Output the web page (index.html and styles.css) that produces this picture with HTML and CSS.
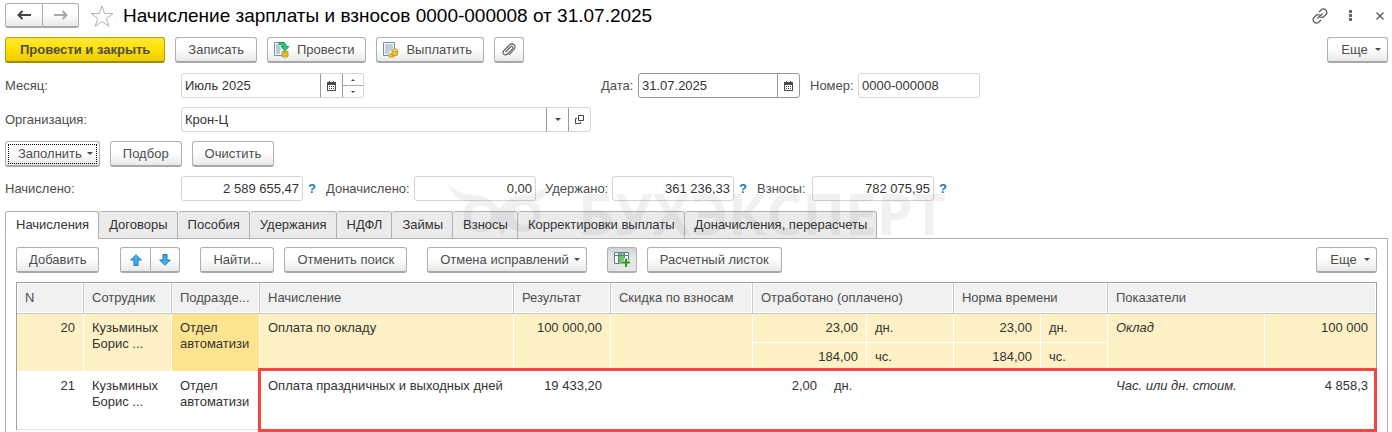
FILE: index.html
```html
<!DOCTYPE html>
<html lang="ru">
<head>
<meta charset="utf-8">
<title>Начисление зарплаты и взносов</title>
<link rel="stylesheet" href="styles.css">
</head>
<body>
<svg class="sprite" aria-hidden="true">
  <symbol id="calendar" viewBox="0 0 9 10"><path d="M0 1h2V0h1v1h3V0h1v1h2v9H0zM1 4v5h7V4z" fill="#4a4a4a" fill-rule="evenodd"/><path d="M2 5h1v1H2zM4 5h1v1H4zM6 5h1v1H6zM2 7h1v1H2zM4 7h1v1H4zM6 7h1v1H6z" fill="#4a4a4a"/></symbol>
  <symbol id="caret" viewBox="0 0 6 3"><path d="M0 0h6L3 3z" fill="#4a4a4a"/></symbol>
</svg>

<header class="titlebar">
  <div class="pair nav">
    <button class="btn" type="button" aria-label="Назад"><svg width="14" height="10" viewBox="0 0 14 10"><path d="M14 5H2M5.500 1L1.500 5l4 4" fill="none" stroke="#444" stroke-width="2"/></svg></button>
    <button class="btn" type="button" aria-label="Вперед"><svg width="14" height="10" viewBox="0 0 14 10"><path d="M0 5h12M8.500 1l4 4-4 4" fill="none" stroke="#aaa" stroke-width="2"/></svg></button>
  </div>
  <button class="plain star" type="button" aria-label="В избранное"><svg width="24" height="22" viewBox="0 0 24 22"><path d="M12 1l2.600 7.500H23l-6.700 5 2.500 7.800L12 16.500l-6.800 4.800 2.500-7.800L1 8.500h8.400z" fill="#fff" stroke="#aeb4bd"/></svg></button>
  <h1>Начисление зарплаты и взносов 0000-000008 от 31.07.2025</h1>
  <div class="window-tools">
    <button class="plain" type="button" aria-label="Ссылка"><svg width="16" height="16" viewBox="0 0 16 16"><g fill="none" stroke="#555" stroke-width="1.200"><path d="M7 4l2.500-2.500q2-1.300 4 .2t1.200 4L12 8.500q-1.500 1.300-3.500.6"/><path d="M9 12l-2.500 2.500q-2 1.300-4-.2t-1.200-4L4 7.500q1.500-1.300 3.500-.6M5.500 10.500l5-5"/></g></svg></button>
    <button class="plain" type="button" aria-label="Меню"><svg width="3" height="11" viewBox="0 0 3 11"><path d="M0 0h3v3H0zM0 4h3v3H0zM0 8h3v3H0z" fill="#666"/></svg></button>
    <button class="plain" type="button" aria-label="Закрыть"><svg width="8" height="8" viewBox="0 0 8 8"><path d="M.5.500l7 7M7.500.500l-7 7" stroke="#555" stroke-width="1.200"/></svg></button>
  </div>
</header>

<div class="toolbar commands">
  <button class="btn primary" type="button">Провести и закрыть</button>
  <button class="btn" type="button">Записать</button>
  <button class="btn with-icon" type="button"><svg width="16" height="17" viewBox="0 0 16 17"><path d="M.5 1.500h10v13H.5z" fill="#f7fafc" stroke="#7892aa"/><path d="M2 4h3M2 6h4M2 8h5M2 10h4M2 12h4" stroke="#8196aa"/><path d="M5 1.500q7-1 7.500 4H15L10.800 10 7 5.500h2.500Q9 3.500 5 3.500z" fill="#21c978" stroke="#0b8e50" stroke-width=".8"/><path d="M8 10.500h6v5q-3 1.500-6 0z" fill="#f3cc3b" stroke="#b98a18" stroke-width=".8"/><path d="M8 12h6M8 14h6" stroke="#c89b24" stroke-width=".8"/></svg>Провести</button>
  <button class="btn with-icon" type="button"><svg width="16" height="16" viewBox="0 0 16 16"><path d="M.5.500h11v13H.5z" fill="#f7fafc" stroke="#6d91b5"/><path d="M2 3h8M2 5h8M2 7h7M2 9h5M2 11h4" stroke="#8da3b8"/><ellipse cx="8.500" cy="13.500" rx="3" ry="1.800" fill="#f3c53b" stroke="#bd8517" stroke-width=".8"/><path d="M9 8v5q2.500 1.500 5.500 0V8z" fill="#f3c53b" stroke="#bd8517" stroke-width=".8"/><ellipse cx="11.700" cy="8.300" rx="2.800" ry="1.400" fill="#ffe47c" stroke="#bd8517" stroke-width=".8"/></svg>Выплатить</button>
  <button class="btn icon-only" type="button" aria-label="Файлы"><svg width="14" height="14" viewBox="0 0 14 14"><path d="M3.500 9l5-5.200q1.200-1 2 0t0 2L5.500 11q-2 1.700-3.700.3t0-3.700L7.500 2q2.500-2.200 4.500-.3t.4 4.300L7 12" fill="none" stroke="#555" stroke-width="1.100"/></svg></button>
  <button class="btn more" type="button">Еще <svg class="caret"><use href="#caret"/></svg></button>
</div>

<main class="form">
  <div class="row">
    <label class="lead" for="month">Месяц:</label>
    <div class="field month">
      <input id="month" value="Июль 2025">
      <button class="addon strong" type="button" aria-label="Выбрать месяц"><svg class="cal"><use href="#calendar"/></svg></button>
      <div class="spinner strong">
        <button type="button" aria-label="Следующий"><svg width="4" height="2" viewBox="0 0 4 2"><path d="M0 2h4L2 0z" fill="#444"/></svg></button>
        <button type="button" aria-label="Предыдущий"><svg width="4" height="2" viewBox="0 0 4 2"><path d="M0 0h4L2 2z" fill="#444"/></svg></button>
      </div>
    </div>
    <div class="document">
      <label for="date">Дата:</label>
      <div class="field date">
        <input id="date" value="31.07.2025">
        <button class="addon strong" type="button" aria-label="Выбрать дату"><svg class="cal"><use href="#calendar"/></svg></button>
      </div>
      <label for="number">Номер:</label>
      <div class="field amount"><input id="number" value="0000-000008"></div>
    </div>
  </div>

  <div class="row">
    <label class="lead" for="org">Организация:</label>
    <div class="field org">
      <input id="org" value="Крон-Ц">
      <button class="addon strong" type="button" aria-label="Список"><svg class="caret"><use href="#caret"/></svg></button>
      <button class="addon strong" type="button" aria-label="Открыть"><svg width="9" height="9" viewBox="0 0 9 9"><path d="M3.500.5h5v5h-5zM2 3.500H.5v5h5V7" fill="none" stroke="#444"/></svg></button>
    </div>
  </div>

  <div class="toolbar">
    <button class="btn fill" type="button">Заполнить <svg class="caret"><use href="#caret"/></svg></button>
    <button class="btn" type="button">Подбор</button>
    <button class="btn" type="button">Очистить</button>
  </div>

  <div class="row totals">
    <label class="lead" for="accrued">Начислено:</label>
    <div class="field amount"><input id="accrued" value="2 589 655,47"></div>
    <button class="help" type="button">?</button>
    <label class="wide" for="extra">Доначислено:</label>
    <div class="field amount"><input id="extra" value="0,00"></div>
    <label class="mid" for="withheld">Удержано:</label>
    <div class="field amount"><input id="withheld" value="361 236,33"></div>
    <button class="help" type="button">?</button>
    <label class="short" for="fees">Взносы:</label>
    <div class="field amount"><input id="fees" value="782 075,95"></div>
    <button class="help" type="button">?</button>
  </div>
</main>

<section class="tabbed">
  <div class="tabs" role="tablist">
    <button class="tab active" type="button" role="tab" aria-selected="true">Начисления</button>
    <button class="tab" type="button" role="tab">Договоры</button>
    <button class="tab" type="button" role="tab">Пособия</button>
    <button class="tab" type="button" role="tab">Удержания</button>
    <button class="tab" type="button" role="tab">НДФЛ</button>
    <button class="tab" type="button" role="tab">Займы</button>
    <button class="tab" type="button" role="tab">Взносы</button>
    <button class="tab" type="button" role="tab">Корректировки выплаты</button>
    <button class="tab" type="button" role="tab">Доначисления, перерасчеты</button>
  </div>
  <div class="watermark" aria-hidden="true">
    <svg width="104" height="56" viewBox="0 0 104 56"><path d="M1 0q8 9 24 10 18 1 26 14Q59 11 77 10 92 9 100 0 98 15 87 17q7 6 5 17-3 13-16 13-12 0-17-8l-5 14-5-14q-6 8-17 8-13 0-16-13-2-9 5-17Q5 14 1 0zM23 30a10 10 0 0 0 20 0 10 10 0 0 0-20 0zM66 30a10 10 0 0 0 20 0 10 10 0 0 0-20 0z" fill="currentColor" fill-rule="evenodd"/></svg>
    <span>БУХЭКСПЕРТ</span>
  </div>

  <div class="panel">
    <div class="toolbar list-tools">
      <button class="btn" type="button">Добавить</button>
      <div class="pair move">
        <button class="btn" type="button" aria-label="Вверх"><svg width="12" height="12" viewBox="0 0 12 12"><path d="M6 .7L11.300 6H8v5.500H4V6H.7z" fill="#3cb1ee" stroke="#2376b5"/></svg></button>
        <button class="btn" type="button" aria-label="Вниз"><svg width="12" height="12" viewBox="0 0 12 12"><path d="M6 11.300L.7 6H4V.5h4V6h3.300z" fill="#3cb1ee" stroke="#2376b5"/></svg></button>
      </div>
      <button class="btn" type="button">Найти...</button>
      <button class="btn" type="button">Отменить поиск</button>
      <button class="btn corrections" type="button">Отмена исправлений <svg class="caret"><use href="#caret"/></svg></button>
      <button class="btn icon-only pressed" type="button" aria-label="Показатели в колонках"><svg width="16" height="15" viewBox="0 0 16 15"><path d="M.5.500h14v11H.5z" fill="#fff" stroke="#5e7c98"/><path d="M5 1h5v11H5z" fill="#76bd6b"/><path d="M0 3.500h15M4.500 0v12M10.500 0v12" stroke="#5e7c98"/><path d="M12 6v9M8 10.500h8" stroke="#eee" stroke-width="4"/><path d="M12 6.500V15M8 10.500h8" stroke="#249b10" stroke-width="2"/></svg></button>
      <button class="btn" type="button">Расчетный листок</button>
      <button class="btn more" type="button">Еще <svg class="caret"><use href="#caret"/></svg></button>
    </div>

    <table class="grid">
      <colgroup>
        <col class="c-n"><col class="c-name"><col class="c-name"><col><col class="c-result"><col class="c-discount">
        <col class="c-days"><col class="c-step"><col class="c-unit"><col class="c-unit"><col class="c-n"><col class="c-metric"><col class="c-value">
      </colgroup>
      <thead>
        <tr><th>N</th><th>Сотрудник</th><th>Подразде...</th><th>Начисление</th><th>Результат</th><th>Скидка по взносам</th><th colspan="3">Отработано (оплачено)</th><th colspan="2">Норма времени</th><th colspan="2">Показатели</th></tr>
      </thead>
      <tbody>
        <tr class="selected">
          <td class="num" rowspan="2">20</td><td rowspan="2">Кузьминых<br>Борис ...</td><td class="current" rowspan="2">Отдел<br>автоматизи</td><td rowspan="2">Оплата по окладу</td><td class="num" rowspan="2">100 000,00</td><td rowspan="2"></td>
          <td class="num" colspan="2">23,00</td><td>дн.</td><td class="num">23,00</td><td>дн.</td><td class="metric" rowspan="2">Оклад</td><td class="num" rowspan="2">100 000</td>
        </tr>
        <tr class="selected"><td class="num" colspan="2">184,00</td><td>чс.</td><td class="num">184,00</td><td>чс.</td></tr>
        <tr class="tall">
          <td class="num">21</td><td>Кузьминых<br>Борис ...</td><td>Отдел<br>автоматизи</td><td>Оплата праздничных и выходных дней</td><td class="num">19 433,20</td><td></td>
          <td class="num">2,00</td><td colspan="2">дн.</td><td></td><td></td><td class="metric">Час. или дн. стоим.</td><td class="num">4 858,3<span class="highlight"></span></td>
        </tr>
      </tbody>
    </table>
  </div>
</section>
</body>
</html>
```
FILE: styles.css
```css
* { box-sizing: border-box; }
html, body { height: 100%; }
body {
  margin: 0;
  padding: 3px 4px 0 5px;
  display: flex;
  flex-direction: column;
  overflow: hidden;
  background: #fff;
  color: #4d4d4d;
  font: 13px/16px "Liberation Sans", Arial, sans-serif;
}
button, input { font: inherit; color: inherit; }
button { margin: 0; white-space: nowrap; }
svg { display: block; flex: none; }
.sprite { position: absolute; width: 0; height: 0; }
.caret { width: 6px; height: 3px; }
.cal { width: 9px; height: 10px; }

.titlebar { display: flex; align-items: center; height: 25px; }
.titlebar h1 { margin: 0 0 0 9px; font-size: 19px; line-height: 24px; font-weight: 400; color: #000; white-space: nowrap; }
.plain { display: flex; align-items: center; justify-content: center; padding: 0; border: 0; background: none; }
.star { margin-left: 11px; }
.window-tools { display: flex; align-items: center; gap: 14px; margin-left: auto; }
.window-tools .plain { width: 16px; height: 16px; }

.btn {
  display: flex;
  align-items: center;
  justify-content: center;
  height: 26px;
  padding: 0 12px;
  border: 1px solid #b0b0b0;
  border-bottom: 2px solid #a8a8a8;
  border-radius: 3px;
  background: linear-gradient(#fff 45%, #e9e9e9);
  font-size: 13px;
}
.primary {
  padding: 0 14px;
  border-color: #b5a100 #b5a100 #a08e00;
  background: linear-gradient(#ffe93a, #ffdf00 50%, #edcc00);
  font-weight: 700;
}
.with-icon { gap: 7px; padding: 0 11px 0 6px; }
.icon-only { width: 30px; padding: 0; }
.pressed { background: linear-gradient(#d2d2d2, #e6e6e6 40%, #e6e6e6); border-color: #b0b0b0; }
.more { width: 61px; margin-left: auto; padding: 0 6px 0 13px; gap: 7px; }
.fill { padding: 0 6px 0 12px; gap: 5px; outline: 1px dotted #000; outline-offset: -4px; }
.pair { display: flex; }
.pair .btn { padding: 0; }
.pair .btn:first-child { border-right: 0; border-radius: 3px 0 0 3px; }
.pair .btn:last-child { border-radius: 0 3px 3px 0; }
.nav .btn { width: 37px; height: 25px; }
.move .btn { width: 30px; }
.move { margin: 0 10px 0 11px; }
.corrections { margin: 0 10px; padding: 0 6px 0 12px; gap: 5px; }

.toolbar { display: flex; gap: 10px; }
.commands { margin-top: 9px; }
.form { display: flex; flex-direction: column; gap: 9px; margin-top: 10px; }
.row { display: flex; align-items: center; }
.lead { flex: none; width: 176px; }
.field { display: flex; flex: none; height: 25px; border: 1px solid #d4d4d4; border-radius: 3px; color: #333; background: #fff; }
.field input { flex: 1; min-width: 0; padding: 0 3px; border: 0; outline: 0; background: none; }
.addon { display: flex; align-items: center; justify-content: center; width: 22px; padding: 0; border: 0; background: none; }
.strong { border-left: 1px solid #999; }
.month { width: 183px; }
.spinner { display: flex; flex-direction: column; width: 21px; }
.spinner button { flex: 1; display: flex; align-items: center; justify-content: center; padding: 0; border: 0; background: none; }
.spinner button + button { border-top: 1px solid #aaa; }
.document { display: flex; align-items: center; margin-left: 237px; }
.document label { width: 37px; }
.document .date { width: 162px; margin-right: 10px; border-color: #999; }
.document .date + label { width: 48px; }
.org { width: 410px; }
.amount { width: 122px; }
.totals .amount input { text-align: right; }
.help { width: 23px; padding: 0 5px; border: 0; background: none; color: #1478be; text-align: left; font-weight: 700; }
.wide { width: 88px; }
.mid { width: 67px; margin-left: 9px; }
.short { width: 55px; }

.tabbed { position: relative; flex: 1; min-height: 0; display: flex; flex-direction: column; margin-top: 10px; }
.tabs { display: flex; height: 28px; }
.tab { position: relative; z-index: 1; padding: 0 9px 0 10px; border: 1px solid #b0b0b0; border-left-width: 0; border-radius: 3px 3px 0 0; background: #ebebeb; color: #333; }
.tab.active { border-left-width: 1px; border-bottom-color: #fff; background: #fff; }
.panel { flex: 1; min-height: 0; overflow: hidden; margin-top: -1px; padding: 8px 10px 0; border: solid #b0b0b0; border-width: 1px 1px 0; }
.watermark {
  position: absolute; z-index: 2; left: 443px; top: -26px;
  display: flex; align-items: center; gap: 26px;
  color: #46465a; opacity: 0.07; pointer-events: none;
  font: 700 57px/56px "Open Sans", sans-serif;
}

.grid { width: 100%; margin-top: 9px; border-collapse: separate; border-spacing: 0; table-layout: fixed; border: 1px solid #a0a0a0; border-bottom: 0; color: #333; }
.c-n { width: 67px; }
.c-name { width: 88px; }
.c-result { width: 97px; }
.c-discount { width: 142px; }
.c-days { width: 73px; }
.c-step { width: 41px; }
.c-unit { width: 87px; }
.c-metric { width: 157px; }
.c-value { width: 111px; }
.grid th { height: 31px; padding: 0 8px; background: #f1f1f1; border-right: 1px solid #c8c8c8; border-bottom: 1px solid #c8c8c8; box-shadow: inset 0 0 0 1px #fff; font-weight: 400; text-align: left; color: #4d4d4d; white-space: nowrap; }
.grid td { height: 29px; padding: 6px 8px 0; border-right: 1px solid transparent; vertical-align: top; white-space: nowrap; overflow: hidden; }
.grid .selected td { background: #fdf1c5; border-right-color: #fff; border-bottom: 1px solid #fff; }
.grid .selected .current { background: #ffe490; }
.grid th:last-child, .grid td.num:last-child { border-right: 0; }
.grid .num { text-align: right; }
.grid .metric { font-style: italic; }
.tall { position: relative; }
.grid .tall td { height: 58px; border-bottom: 1px solid #e2e2e2; }
.highlight { position: absolute; left: 241px; right: -1px; top: -4px; bottom: -2px; border: 3px solid #fa4343; }
```
